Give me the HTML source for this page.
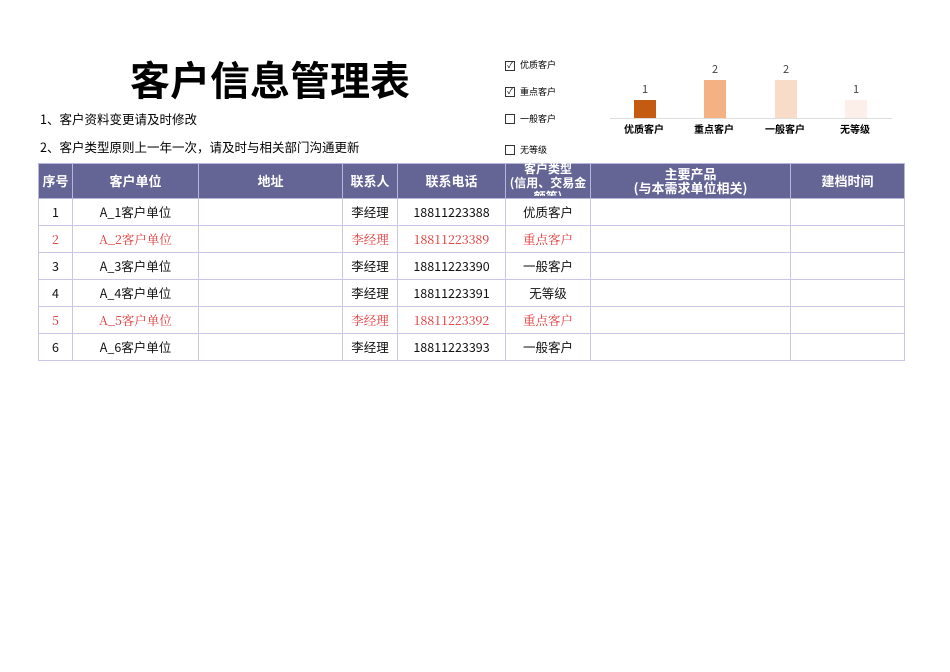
<!DOCTYPE html>
<html><head><meta charset="utf-8"><style>
body{margin:0;width:950px;height:672px;background:#fff;position:relative;font-family:"Noto Sans CJK SC","Liberation Sans",sans-serif;overflow:hidden}
.a{position:absolute;white-space:nowrap;line-height:1.2}
table{position:absolute;left:38px;top:163px;border-collapse:collapse;table-layout:fixed}
td{border:1px solid #c9c6ea;text-align:center;font-size:12.5px;height:26px;padding:0;color:#111;vertical-align:middle;line-height:16px}
tr.h td{background:#646495;color:#fff;font-weight:bold;height:34px;font-size:13px;border-color:#b8b6dc}
tr.r td{color:#e03434;font-family:"Noto Serif CJK SC","Liberation Serif",serif}
.cb{position:absolute;width:8px;height:8px;border:1px solid #333;font-size:8px;line-height:8px;text-align:center}
.bar{position:absolute;width:22px}
</style></head><body>
<div class="a" style="left:130px;top:51px;font-size:40px;font-weight:bold;line-height:54px">客户信息管理表</div>
<div class="a" style="left:40px;top:111px;font-size:12.5px">1、客户资料变更请及时修改</div>
<div class="a" style="left:40px;top:139px;font-size:12.5px">2、客户类型原则上一年一次，请及时与相关部门沟通更新</div>
<div class="cb" style="left:505px;top:61px">✓</div><div class="a" style="left:520px;top:60px;font-size:9px">优质客户</div>
<div class="cb" style="left:505px;top:87px">✓</div><div class="a" style="left:520px;top:87px;font-size:9px">重点客户</div>
<div class="cb" style="left:505px;top:114px"></div><div class="a" style="left:520px;top:114px;font-size:9px">一般客户</div>
<div class="cb" style="left:505px;top:145px"></div><div class="a" style="left:520px;top:145px;font-size:9px">无等级</div>
<div class="a" style="left:610px;top:118px;width:282px;height:1px;background:#ddd"></div>
<div class="bar" style="left:634px;top:100px;height:18px;background:#c55a11"></div>
<div class="bar" style="left:704px;top:80px;height:38px;background:#f4b183"></div>
<div class="bar" style="left:775px;top:80px;height:38px;background:#f8dcc8"></div>
<div class="bar" style="left:845px;top:100px;height:18px;background:#fcefe9"></div>
<div class="a" style="left:642px;top:83px;font-size:11px;color:#444">1</div>
<div class="a" style="left:712px;top:63px;font-size:11px;color:#444">2</div>
<div class="a" style="left:783px;top:63px;font-size:11px;color:#444">2</div>
<div class="a" style="left:853px;top:83px;font-size:11px;color:#444">1</div>
<div class="a" style="left:624px;top:123px;font-size:10px;font-weight:bold">优质客户</div>
<div class="a" style="left:694px;top:123px;font-size:10px;font-weight:bold">重点客户</div>
<div class="a" style="left:765px;top:123px;font-size:10px;font-weight:bold">一般客户</div>
<div class="a" style="left:840px;top:123px;font-size:10px;font-weight:bold">无等级</div>
<table>
<colgroup><col style="width:34px"><col style="width:126px"><col style="width:144px"><col style="width:55px"><col style="width:108px"><col style="width:85px"><col style="width:200px"><col style="width:114px"></colgroup>
<tr class="h"><td>序号</td><td>客户单位</td><td>地址</td><td>联系人</td><td>联系电话</td><td style="font-size:12px;line-height:14px"><div style="height:34px;overflow:hidden;margin-top:-4px">客户类型<br>(信用、交易金<br>额等)</div></td><td style="line-height:14px">主要产品<br>(与本需求单位相关)</td><td>建档时间</td></tr>
<tr><td>1</td><td>A_1客户单位</td><td></td><td>李经理</td><td>18811223388</td><td>优质客户</td><td></td><td></td></tr>
<tr class="r"><td>2</td><td>A_2客户单位</td><td></td><td>李经理</td><td>18811223389</td><td>重点客户</td><td></td><td></td></tr>
<tr><td>3</td><td>A_3客户单位</td><td></td><td>李经理</td><td>18811223390</td><td>一般客户</td><td></td><td></td></tr>
<tr><td>4</td><td>A_4客户单位</td><td></td><td>李经理</td><td>18811223391</td><td>无等级</td><td></td><td></td></tr>
<tr class="r"><td>5</td><td>A_5客户单位</td><td></td><td>李经理</td><td>18811223392</td><td>重点客户</td><td></td><td></td></tr>
<tr><td>6</td><td>A_6客户单位</td><td></td><td>李经理</td><td>18811223393</td><td>一般客户</td><td></td><td></td></tr>
</table>
</body></html>
